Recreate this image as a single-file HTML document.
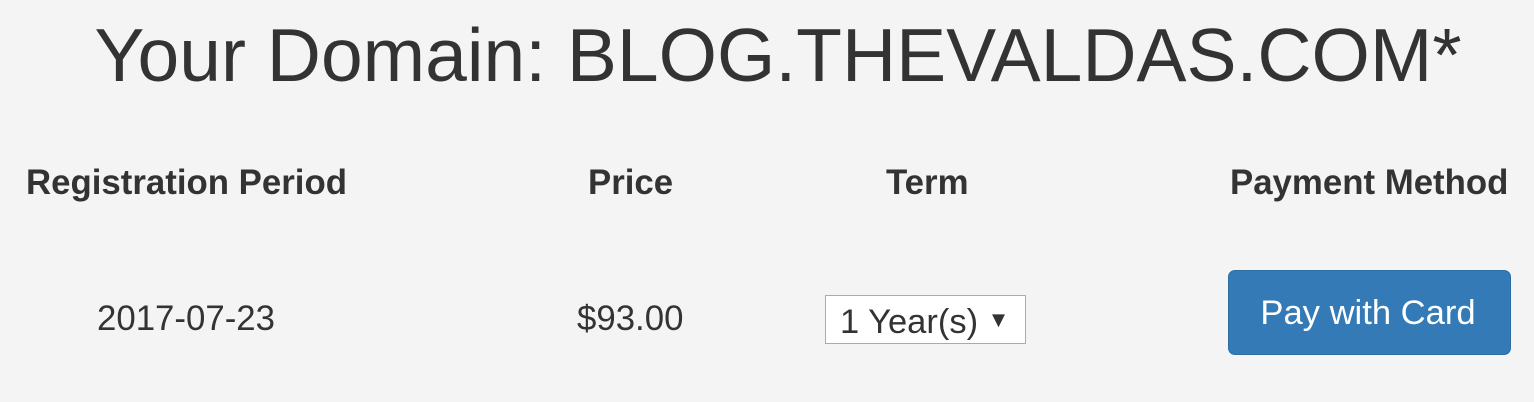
<!DOCTYPE html>
<html><head><style>
body{margin:0;width:1534px;height:402px;background:#f4f4f4;font-family:"Liberation Sans",sans-serif;color:#333;position:relative;overflow:hidden}
.a{position:absolute;white-space:nowrap}
.t{left:0;width:1556px;text-align:center;top:12px;font-size:75px}
.h{font-weight:bold;font-size:34.8px;top:163px}
.d{font-size:34.8px;top:299px}
.sel{left:825px;top:295px;width:201px;height:49px;background:#fff;border:1px solid #aaa;box-sizing:border-box;font-size:34.5px;padding-left:14px;line-height:52px}
.btn{left:1228px;top:270px;width:283px;height:85px;background:#337ab7;border:1px solid #2e6da4;box-sizing:border-box;border-radius:7px;color:#fff;font-size:34.6px;text-align:center;line-height:84px;padding-right:3px}
</style></head><body>
<div class="a t">Your Domain: BLOG.THEVALDAS.COM*</div>
<div class="a h" style="left:26px">Registration Period</div>
<div class="a h" style="left:588px">Price</div>
<div class="a h" style="left:886px">Term</div>
<div class="a h" style="left:1230px">Payment Method</div>
<div class="a d" style="left:97px">2017-07-23</div>
<div class="a d" style="left:577px">$93.00</div>
<div class="a sel">1 Year(s) <span style="font-size:22px;position:relative;top:-6px">▼</span></div>
<div class="a btn">Pay with Card</div>
</body></html>
